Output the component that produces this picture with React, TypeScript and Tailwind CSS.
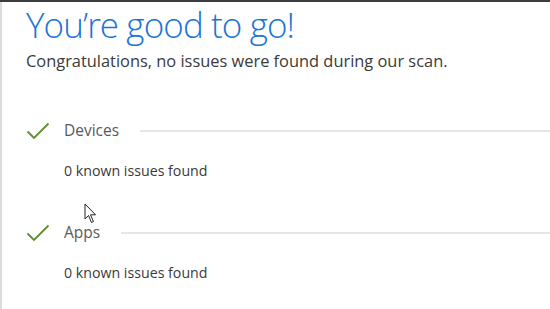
import React from "react";

const sections = [
  { name: "Devices", detail: "0 known issues found" },
  { name: "Apps", detail: "0 known issues found" },
];

function Check() {
  return (
    <svg width="24" height="18" viewBox="0 0 24 18" fill="none">
      <path d="M1.5 9.5 L8 16 L22.5 1.5" stroke="#5e8f2c" strokeWidth="1.8" />
    </svg>
  );
}

function Cursor() {
  return (
    <svg width="14" height="21" viewBox="0 0 14 21" className="absolute left-[84px] top-[201px]">
      <path d="M1 1 L1 16 L4.5 12.5 L7.5 19.5 L9.5 18.5 L6.5 11.8 L11.5 11.8 Z" fill="#fff" stroke="#222" strokeWidth="1" strokeLinejoin="round" />
    </svg>
  );
}

export default function App() {
  return (
    <div className="relative w-[550px] h-[309px] overflow-hidden bg-white border-t-2 border-[#3c3c3c] font-['Open_Sans',sans-serif]">
      <div className="h-full border-l-2 border-[#dcdcdc] pl-[24px] pt-[1px]">
        <h1 className="text-[35px] leading-[44px] font-light text-[#1b74d6] tracking-[-0.9px]">
          You’re good to go!
        </h1>
        <p className="mt-[3px] text-[16.4px] leading-[22px] text-[#3a3a3a]">
          Congratulations, no issues were found during our scan.
        </p>

        <div className="mt-[46px] flex flex-col gap-[39px]">
          {sections.map((s) => (
            <div key={s.name}>
              <div className="flex items-center h-[26px]">
                <div className="w-[38px] flex items-center">
                  <Check />
                </div>
                <span className="text-[15.5px] text-[#5a5a5a]">{s.name}</span>
                <div className="ml-[21px] flex-1 h-[2px] bg-[#e6e6e6]" />
              </div>
              <p className="mt-[17px] pl-[38px] text-[14.2px] leading-[20px] text-[#3a3a3a]">
                {s.detail}
              </p>
            </div>
          ))}
        </div>
      </div>
      <Cursor />
    </div>
  );
}
